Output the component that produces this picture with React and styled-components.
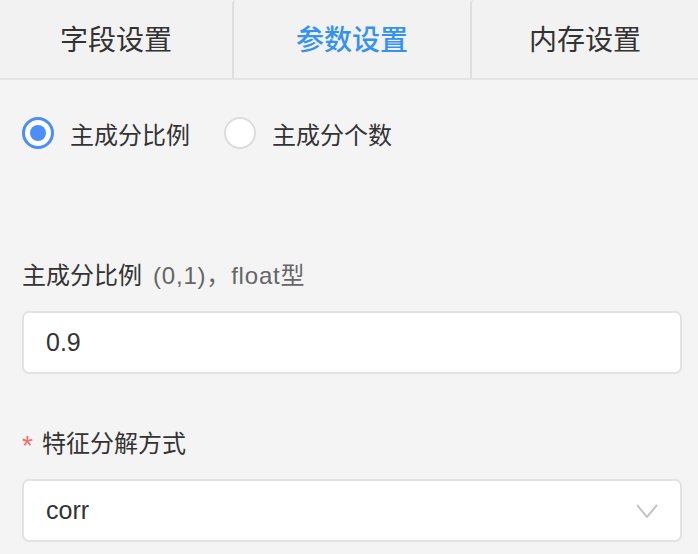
import React, { useState } from "react";
import styled, { createGlobalStyle } from "styled-components";

const GlobalStyle = createGlobalStyle`
    html, body {
        margin: 0;
        padding: 0;
        background: #f4f4f4;
    }
    body {
        font-family: "Liberation Sans", "Noto Sans CJK SC", sans-serif;
        color: #333;
    }
`

const Page = styled.div`
    width: 698px;
    height: 554px;
    overflow: hidden;
    background: #f4f4f4;
`

const TabBar = styled.div`
    display: flex;
    height: 78px;
    background: #f2f2f2;
    border-bottom: 2px solid #e4e4e4;
`

const Tab = styled.div`
    flex: ${p => p.$grow};
    display: flex;
    align-items: center;
    justify-content: center;
    padding-bottom: 2px;
    font-family: "Noto Sans CJK SC", sans-serif;
    font-size: 28px;
    font-weight: ${p => (p.$active ? 500 : 400)};
    color: ${p => (p.$active ? "#3592f0" : "#333")};
    border-left: ${p => (p.$first ? "none" : "2px solid #dedede")};
    border-top-left-radius: ${p => (p.$first ? "0" : "4px")};
    cursor: pointer;
`

const Body = styled.div`
    padding: 37px 16px 0 22px;
    display: flex;
    flex-direction: column;
`

const RadioRow = styled.div`
    display: flex;
    align-items: center;
    gap: 34px;
    height: 32px;
`

const RadioItem = styled.label`
    display: flex;
    align-items: center;
    gap: 16px;
    font-family: "Noto Sans CJK SC", sans-serif;
    font-size: 24px;
    color: #333;
    cursor: pointer;
`

const RadioCircle = styled.span`
    box-sizing: border-box;
    width: 32px;
    height: 32px;
    border-radius: 50%;
    background: #fff;
    border: ${p => (p.$checked ? "3px solid #4b8ef7" : "2px solid #dcdcdc")};
    display: flex;
    align-items: center;
    justify-content: center;

    &::after {
        content: "";
        display: ${p => (p.$checked ? "block" : "none")};
        width: 16px;
        height: 16px;
        border-radius: 50%;
        background: #4b8ef7;
    }
`

const FieldLabel = styled.div`
    margin-top: ${p => p.$top}px;
    height: 32px;
    display: flex;
    align-items: center;
    font-family: "Noto Sans CJK SC", sans-serif;
    font-size: 24px;
    color: #333;
`

const Hint = styled.span`
    color: #666;
    margin-left: 11px;
    font-family: "Liberation Sans", "Noto Sans CJK SC", sans-serif;
    font-size: 24px;
    letter-spacing: 0.8px;
`

const Required = styled.span`
    color: #f56c6c;
    width: 20px;
    font-family: "Liberation Sans", sans-serif;
    font-size: 28px;
    line-height: 1;
    padding-top: 10px;
`

const Box = styled.div`
    box-sizing: border-box;
    margin-top: 22px;
    height: 63px;
    background: #fff;
    border: 2px solid #e2e2e2;
    border-radius: 7px;
    padding: 0 22px;
    display: flex;
    align-items: center;
    justify-content: space-between;
    font-size: 25px;
    color: #333;
`

const Chevron = () => (
    <svg width="22" height="14" viewBox="0 0 22 14" fill="none">
        <polyline points="1,1 11,13 21,1" stroke="#c4c4c4" strokeWidth="2" />
    </svg>
)

export default () => {
    const [mode, setMode] = useState("ratio");
    return (
        <Page>
            <GlobalStyle />
            <TabBar>
                <Tab $grow={232} $first>字段设置</Tab>
                <Tab $grow={236} $active>参数设置</Tab>
                <Tab $grow={226}>内存设置</Tab>
            </TabBar>
            <Body>
                <RadioRow>
                    <RadioItem onClick={() => setMode("ratio")}>
                        <RadioCircle $checked={mode === "ratio"} />
                        主成分比例
                    </RadioItem>
                    <RadioItem onClick={() => setMode("count")}>
                        <RadioCircle $checked={mode === "count"} />
                        主成分个数
                    </RadioItem>
                </RadioRow>
                <FieldLabel $top={108}>
                    主成分比例<Hint>(0,1)，float型</Hint>
                </FieldLabel>
                <Box>0.9</Box>
                <FieldLabel $top={51}>
                    <Required>*</Required>特征分解方式
                </FieldLabel>
                <Box>
                    corr
                    <Chevron />
                </Box>
            </Body>
        </Page>
    )
}
